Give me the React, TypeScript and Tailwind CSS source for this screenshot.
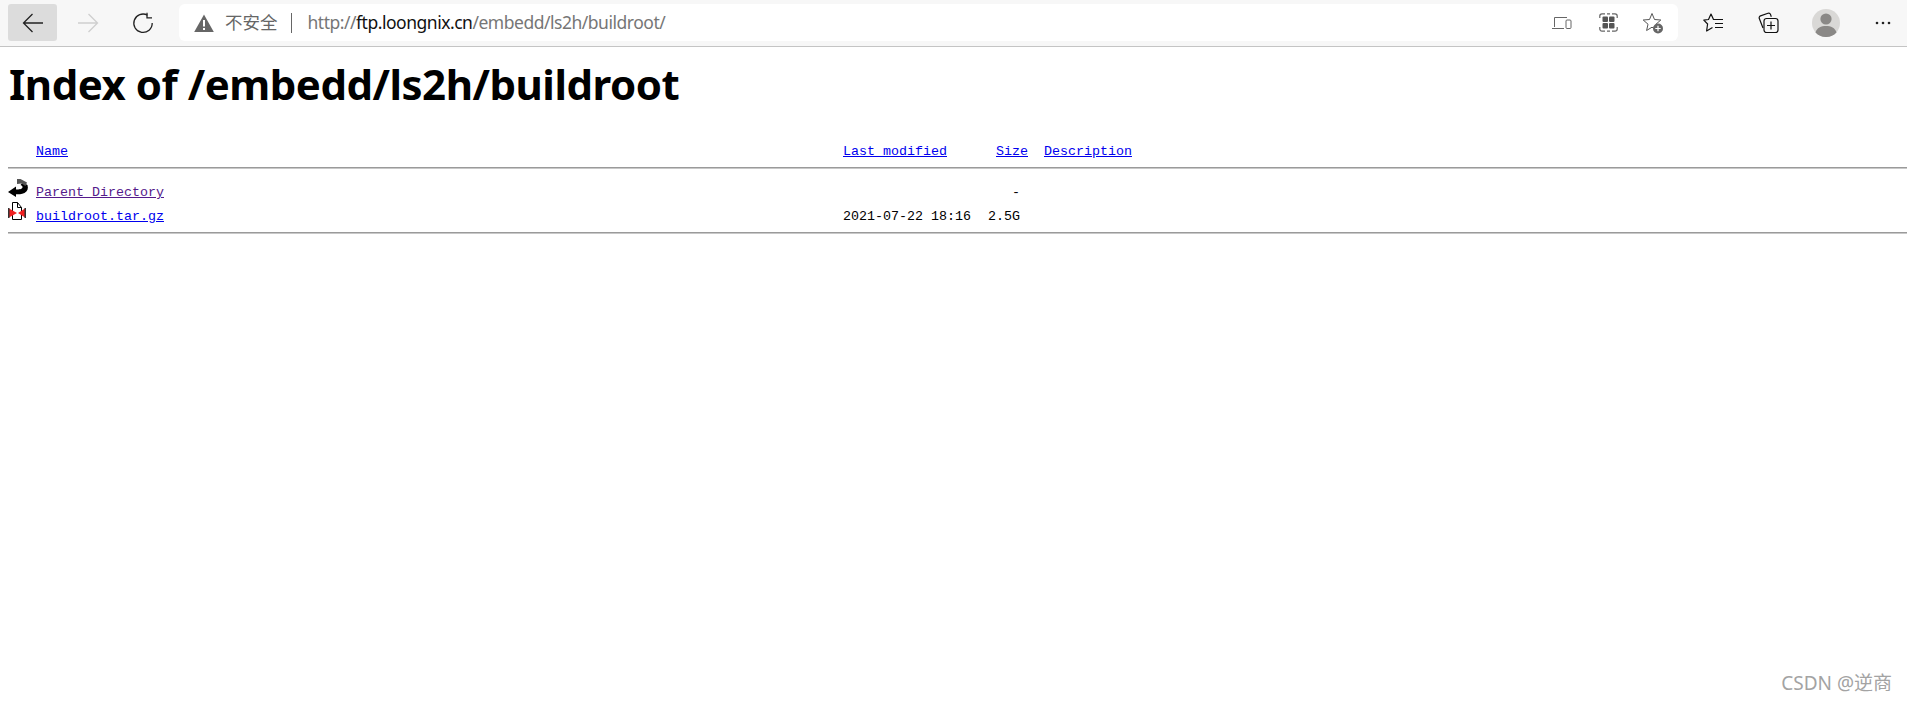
const Back = ({ color = "#222" }: { color?: string }) => (
  <svg width="22" height="22" viewBox="0 0 22 22" fill="none" stroke={color} strokeWidth="1.3">
    <path d="M21 11H1.5M10.5 2l-9 9 9 9" />
  </svg>
);

const Icons = {
  forward: (
    <svg width="22" height="22" viewBox="0 0 22 22" fill="none" stroke="#cfcfcf" strokeWidth="1.3">
      <path d="M1 11h19.5M11.5 2l9 9-9 9" />
    </svg>
  ),
  refresh: (
    <svg width="22" height="22" viewBox="0 0 22 22" fill="none" stroke="#222" strokeWidth="1.3">
      <path d="M15.5 3.2A9.2 9.2 0 1 0 20.2 11" />
      <path d="M15 .8v5h5" />
    </svg>
  ),
  warning: (
    <svg width="20" height="18" viewBox="0 0 20 18">
      <path d="M10 0.5 19.8 18H.2z" fill="#666" />
      <rect x="9" y="6" width="2" height="6.5" fill="#fff" />
      <rect x="9" y="14" width="2" height="2" fill="#fff" />
    </svg>
  ),
  device: (
    <svg width="20" height="14" viewBox="0 0 20 14" fill="none" stroke="#666" strokeWidth="1">
      <path d="M2.5 11V1.500h12.500M0 12.500h12" />
      <rect x="14" y="4" width="5" height="8.500" rx="1" />
    </svg>
  ),
  apps: (
    <svg width="19" height="19" viewBox="0 0 19 19" fill="none">
      <path d="M.8 5V3A2.200 2.200 0 0 1 3 .8h3M13 .8h3A2.200 2.200 0 0 1 18.200 3v2M18.200 14v2a2.200 2.200 0 0 1-2.200 2.200h-3M6 18.200H3A2.200 2.200 0 0 1 .8 16v-2M8 .8h3M8 18.200h3" stroke="#666" strokeWidth="1.200" />
      <rect x="3.500" y="3.500" width="5.500" height="5.500" rx="1" fill="#555" />
      <rect x="10" y="3.500" width="5.500" height="5.500" rx="1" fill="#555" />
      <rect x="3.500" y="10" width="5.500" height="5.500" rx="1" fill="#555" />
      <rect x="10" y="10" width="5.500" height="5.500" rx="1" fill="#555" />
    </svg>
  ),
  starAdd: (
    <svg width="22" height="22" viewBox="0 0 22 22" fill="none">
      <path d="M10 1.500l2.500 6 6.300.5-4.800 4.200 1.400 6.200L10 15.200l-5.400 3.300 1.400-6.300L1.200 8l6.300-.5z" stroke="#555" strokeWidth="1" strokeLinejoin="round" />
      <circle cx="16" cy="16.500" r="5" fill="#666" />
      <path d="M16 13.800v5.400M13.300 16.500h5.400" stroke="#fff" strokeWidth="1.200" />
    </svg>
  ),
  favorites: (
    <svg width="21" height="20" viewBox="0 0 21 20" fill="none" stroke="#111" strokeWidth="1.200" strokeLinejoin="round">
      <path d="M20 6.500h-9.500L8 1 5.500 6.500.8 7.200 4.600 11l-1 7 5.900-3.500" />
      <path d="M12 10.500h8M12 14.500h8" />
    </svg>
  ),
  collections: (
    <svg width="21" height="22" viewBox="0 0 21 22" fill="none" stroke="#111" strokeWidth="1.200">
      <path d="M5 16 1.300 6.500a2 2 0 0 1 1.200-2.600L10 1.200a2 2 0 0 1 2.500 1.200l.8 2.300" />
      <rect x="6" y="6.500" width="14" height="14" rx="2.500" />
      <path d="M13 9.500v8M9 13.500h8" />
    </svg>
  ),
  avatar: (
    <svg width="28" height="28" viewBox="0 0 28 28">
      <circle cx="14" cy="14" r="14" fill="#d9d8d6" />
      <circle cx="14" cy="10" r="5.600" fill="#8a8886" />
      <path d="M3.500 23.500C5 18.500 9 17 14 17s9 1.500 10.500 6.500A14 14 0 0 1 14 28a14 14 0 0 1-10.500-4.500z" fill="#8a8886" />
    </svg>
  ),
  dots: (
    <svg width="16" height="4" viewBox="0 0 16 4" fill="#222">
      <circle cx="2" cy="2" r="1.300" />
      <circle cx="8" cy="2" r="1.300" />
      <circle cx="14" cy="2" r="1.300" />
    </svg>
  ),
  parent: (
    <svg width="21" height="18" viewBox="0 0 21 18">
      <path d="M0 13 8 7.500v3c3 0 6-.3 6.500-2 .2-1-.5-2-2-2.500l2-2.500 5 2.500c1 3.500 0 6.500-3 8-3 1.300-6 1.300-8.500 1.300V18z" fill="#000" />
      <path d="M9 0h3.500L19 3.500l-1.500 3.500-4-2.500L9 5z" fill="#555" />
    </svg>
  ),
  archive: (
    <svg width="18" height="18" viewBox="0 0 18 18">
      <path d="M4.500.5h5l4 5v12h-9z" fill="#fff" stroke="#000" />
      <path d="M9.500.5v5h4" fill="none" stroke="#000" />
      <path d="M1 6.500l8 4.500-8 4.500z" fill="#f02020" />
      <path d="M17 6.500 10 11l7 4.500z" fill="#f02020" />
      <rect x="0" y="6" width="1.500" height="10" fill="#333" />
      <rect x="16.500" y="6" width="1.500" height="10" fill="#333" />
    </svg>
  ),
};

const IconSlot = ({ children, className = "" }: { children: React.ReactNode; className?: string }) => (
  <div className={`flex h-[37px] shrink-0 items-center justify-center ${className}`}>{children}</div>
);

const linkClass = "text-[#0000ee] underline";

export default function App() {
  return (
    <div className="relative h-[701px] overflow-hidden bg-white">
      <header className="flex h-[47px] items-start border-b border-[#c4c4c4] bg-[#f7f7f7] pt-1 pl-2 font-['Noto_Sans','Noto_Sans_CJK_SC',sans-serif]">
        <div className="flex shrink-0 gap-1.5">
          <IconSlot className="w-[49px] rounded-[3px] bg-[#dcdcdc]">
            <Back />
          </IconSlot>
          <IconSlot className="w-[49px]">{Icons.forward}</IconSlot>
          <IconSlot className="w-[49px]">{Icons.refresh}</IconSlot>
        </div>
        <div className="ml-[12px] flex h-[37px] w-[1499px] shrink-0 items-center rounded-md bg-white">
          <div className="ml-[15px] flex items-center">{Icons.warning}</div>
          <span className="ml-[11px] text-[17.500px] leading-none text-[#666]">不安全</span>
          <span className="ml-[13px] h-[20px] w-px bg-[#666]" />
          <div className="ml-[16px] text-[17.500px] leading-none tracking-[-0.48px] whitespace-nowrap text-[#767676]">
            http://<span className="text-[#111]">ftp.loongnix.cn</span>/embedd/ls2h/buildroot/
          </div>
          <div className="ml-auto flex items-center">
            <IconSlot className="w-[46px]">{Icons.device}</IconSlot>
            <IconSlot className="w-[46px]">{Icons.apps}</IconSlot>
            <IconSlot className="w-[44px]">{Icons.starAdd}</IconSlot>
            <div className="w-[3px]" />
          </div>
        </div>
        <div className="ml-[13px] flex shrink-0 items-center">
          <IconSlot className="w-[44px]">{Icons.favorites}</IconSlot>
          <IconSlot className="w-[66px]">{Icons.collections}</IconSlot>
          <IconSlot className="w-[50px]">{Icons.avatar}</IconSlot>
          <IconSlot className="w-[56px] pl-[8px]">{Icons.dots}</IconSlot>
        </div>
      </header>

      <main className="pl-2 font-['Liberation_Mono',monospace] text-[13.330px] leading-[16px] text-black">
        <h1 className="mt-[14px] mb-[37px] ml-[1px] font-['Noto_Sans','Open_Sans',sans-serif] text-[42px] leading-[46px] font-bold tracking-[-0.48px] whitespace-nowrap">
          Index of /embedd/ls2h/buildroot
        </h1>
        <div className="grid grid-cols-[28px_807px_153px_48px_1fr] items-end whitespace-pre">
          <div />
          <a className={linkClass}>Name</a>
          <a className={linkClass}>Last modified</a>
          <a className={linkClass}>Size</a>
          <a className={linkClass}>Description</a>

          <div className="col-span-5 mt-[7px] mb-[12px] h-[2px] border-t border-b border-t-[#9a9a9a] border-b-[#c8c8c8]" />

          <div className="-mt-[2px] flex h-[26px] items-start">{Icons.parent}</div>
          <a className="self-center text-[#551a8b] underline">Parent Directory</a>
          <div />
          <div className="self-center pl-[16px]">-</div>
          <div />

          <div className="-mt-[3px] flex h-[27px] items-start">{Icons.archive}</div>
          <a className={`${linkClass} self-center`}>buildroot.tar.gz</a>
          <div className="self-center">2021-07-22 18:16</div>
          <div className="self-center -ml-[8px]">2.5G</div>
          <div />

          <div className="col-span-5 mt-[3px] h-[2px] border-t border-b border-t-[#9a9a9a] border-b-[#c8c8c8]" />
        </div>
      </main>

      <div className="absolute right-[15px] bottom-[6px] font-['Noto_Sans','Noto_Sans_CJK_SC',sans-serif] text-[19px] leading-[24px] text-[#a3a3a3]">
        CSDN @逆商
      </div>
    </div>
  );
}
